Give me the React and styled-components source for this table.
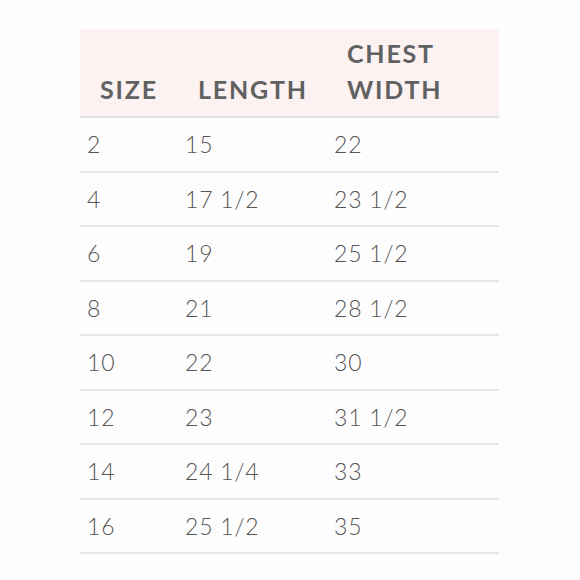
import React from 'react';
import styled, { createGlobalStyle } from 'styled-components';

const GlobalStyle = createGlobalStyle`
  body {
    margin: 0;
    background: #fefdfd;
    font-family: Lato, "Noto Sans", sans-serif;
  }
`;

const Page = styled.div`
  width: 580px;
  height: 580px;
  padding: 29px 0 0 80px;
  box-sizing: border-box;
`;

const Table = styled.div`
  width: 419px;
  display: grid;
  grid-template-columns: 98px 149px 1fr;
`;

const HeadCell = styled.div`
  background: #fdf2f2;
  height: 89px;
  box-sizing: border-box;
  border-bottom: 2px solid #e1e3e8;
  display: flex;
  align-items: flex-end;
  padding: 0 0 9px 20px;
  color: #616161;
  font-weight: 700;
  font-size: 25px;
  letter-spacing: 1.8px;
  line-height: 36px;
`;

const Cell = styled.div`
  height: 54.5px;
  box-sizing: border-box;
  border-bottom: 2px solid #e3e5e9;
  display: flex;
  align-items: center;
  padding-left: 7px;
  color: #555;
  font-size: 23px;
  font-weight: 300;
  letter-spacing: 0.8px;
`;

const rows = [
  ['2', '15', '22'],
  ['4', '17 1/2', '23 1/2'],
  ['6', '19', '25 1/2'],
  ['8', '21', '28 1/2'],
  ['10', '22', '30'],
  ['12', '23', '31 1/2'],
  ['14', '24 1/4', '33'],
  ['16', '25 1/2', '35'],
];

const App = () => (
  <Page>
    <GlobalStyle />
    <Table>
      <HeadCell>SIZE</HeadCell>
      <HeadCell>LENGTH</HeadCell>
      <HeadCell>CHEST<br />WIDTH</HeadCell>
      {rows.map((row) => row.map((v, i) => (
        <Cell key={`${row[0]}-${i}`}>{v}</Cell>
      )))}
    </Table>
  </Page>
);

export default App;
